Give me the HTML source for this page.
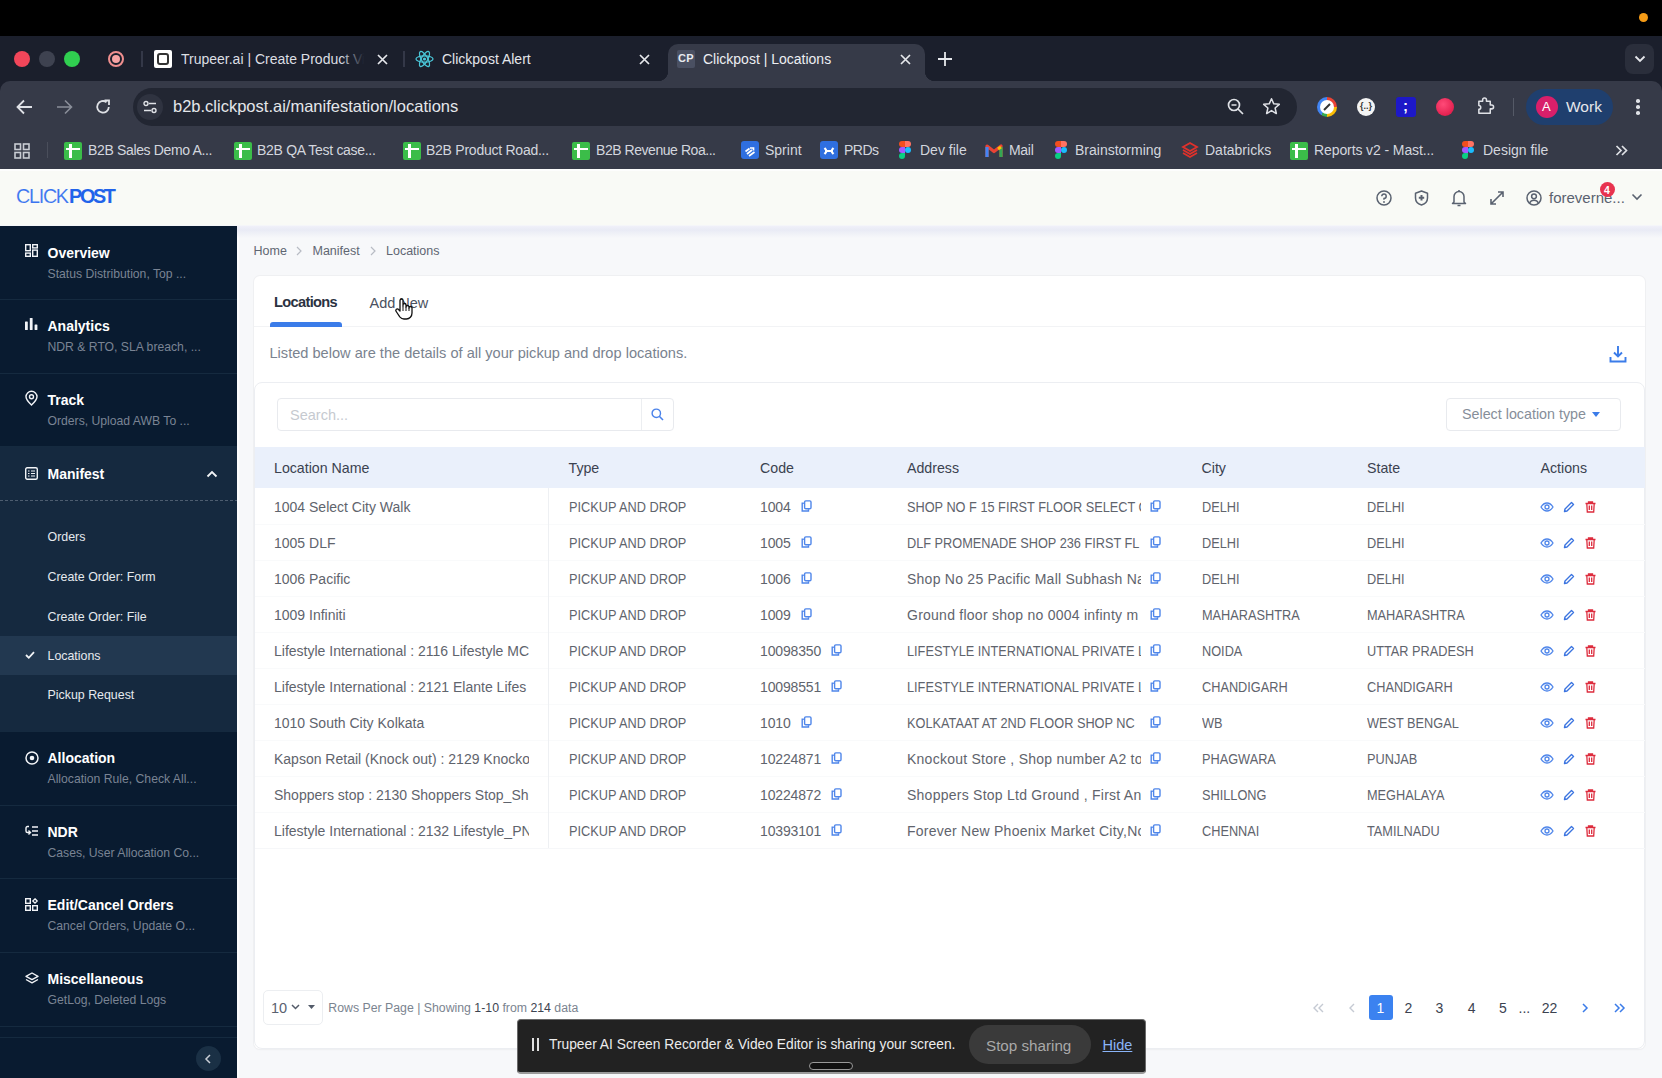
<!DOCTYPE html>
<html><head><meta charset="utf-8">
<style>
*{box-sizing:border-box;margin:0;padding:0}
html,body{width:1662px;height:1078px;overflow:hidden;background:#f5f6f9;font-family:"Liberation Sans",sans-serif}
.a{position:absolute}
.t{position:absolute;white-space:nowrap;line-height:1}
svg{position:absolute;overflow:visible}
/* chrome */
#topbar{left:0;top:0;width:1662px;height:36px;background:#000}
#tabstrip{left:0;top:36px;width:1662px;height:64px;background:#1b1f2c}
#toolbar{left:0;top:81px;width:1662px;height:89px;background:#363a48;border-radius:10px 10px 0 0}
#omni{left:133px;top:88px;width:1163px;height:38px;background:#222632;border-radius:19px}
.tabtxt{color:#e3e5ea;font-size:14px}
.bm{color:#d3d6de;font-size:14px}
/* app */
#apphdr{left:0;top:170px;width:1662px;height:56px;background:#f8f8f6;border-top:1px solid #d7d8dc}
#side{left:0;top:226px;width:237px;height:852px;background:#0b1a31}
#main{left:237px;top:226px;width:1425px;height:852px;background:#f7f8fa}
.st{color:#fff;font-weight:bold}
.ss{color:#7a8494}
.sep{position:absolute;left:0;width:237px;height:1px;background:#152a3f}
.sub{color:#e6e9ee}
/* table */
.th{color:#3a4150;font-size:14.5px}
.td{color:#50586a;font-size:14px}
</style></head><body>
<div class="a" id="topbar"></div>
<div class="a" style="left:1639px;top:13px;width:9px;height:9px;border-radius:50%;background:#f59b16"></div>
<div class="a" id="tabstrip"></div>
<div class="a" id="toolbar"></div>

<!-- CHROME -->
<div class="a" style="left:14px;top:51px;width:16px;height:16px;border-radius:50%;background:#f2465a"></div>
<div class="a" style="left:39px;top:51px;width:16px;height:16px;border-radius:50%;background:#3e4250"></div>
<div class="a" style="left:64px;top:51px;width:16px;height:16px;border-radius:50%;background:#30cf50"></div>
<div class="a" style="left:108px;top:51px;width:16px;height:16px;border-radius:50%;border:2px solid #f08f8f"></div>
<div class="a" style="left:112px;top:55px;width:8px;height:8px;border-radius:50%;background:#f7a3a3"></div>
<div class="a" style="left:141px;top:51px;width:2px;height:16px;background:#343848"></div>
<div class="a" style="left:154px;top:50px;width:18px;height:18px;background:#fff;border-radius:2px"></div>
<div class="a" style="left:157px;top:53px;width:12px;height:12px;border:2px solid #333;border-radius:3px"></div>
<div class="a" style="left:181px;top:48px;width:183px;height:22px;overflow:hidden"><div class="t tabtxt" style="left:0;top:4px;color:#dcdee3">Trupeer.ai | Create Product Vi</div><div class="a" style="left:160px;top:0;width:23px;height:22px;background:linear-gradient(90deg,rgba(27,31,44,0),#1b1f2c)"></div></div>
<svg style="left:377px;top:54px" width="11" height="11" viewBox="0 0 11 11"><path d="M1 1L10 10M10 1L1 10" stroke="#e6e8ec" stroke-width="1.7"/></svg>
<div class="a" style="left:403px;top:51px;width:2px;height:16px;background:#343848"></div>
<svg style="left:415px;top:50px" width="19" height="18" viewBox="-10 -9 20 18"><ellipse rx="9" ry="3.3" fill="none" stroke="#4ac6d8" stroke-width="1.3"/><ellipse rx="9" ry="3.3" transform="rotate(60)" fill="none" stroke="#4ac6d8" stroke-width="1.3"/><ellipse rx="9" ry="3.3" transform="rotate(-60)" fill="none" stroke="#4ac6d8" stroke-width="1.3"/><circle r="1.7" fill="#4ac6d8"/></svg>
<div class="t tabtxt" style="left:442px;top:52px">Clickpost Alert</div>
<svg style="left:639px;top:54px" width="11" height="11" viewBox="0 0 11 11"><path d="M1 1L10 10M10 1L1 10" stroke="#e6e8ec" stroke-width="1.7"/></svg>
<!-- active tab -->
<div class="a" style="left:668px;top:44px;width:257px;height:40px;background:#363a48;border-radius:10px 10px 0 0"></div>
<div class="a" style="left:658px;top:71px;width:10px;height:10px;background:radial-gradient(circle at 0 0,#1b1f2c 10px,#363a48 10.5px)"></div>
<div class="a" style="left:925px;top:71px;width:10px;height:10px;background:radial-gradient(circle at 100% 0,#1b1f2c 10px,#363a48 10.5px)"></div>
<div class="a" style="left:677px;top:50px;width:18px;height:18px;background:#4a5062;border-radius:2px"></div>
<div class="t" style="left:678px;top:53px;font-size:11px;font-weight:bold;color:#e8eaf0;letter-spacing:0.3px">CP</div>
<div class="t tabtxt" style="left:703px;top:52px;color:#eceef2">Clickpost | Locations</div>
<svg style="left:900px;top:54px" width="11" height="11" viewBox="0 0 11 11"><path d="M1 1L10 10M10 1L1 10" stroke="#e6e8ec" stroke-width="1.7"/></svg>
<svg style="left:938px;top:52px" width="14" height="14" viewBox="0 0 14 14"><path d="M7 0V14M0 7H14" stroke="#e6e8ec" stroke-width="1.8"/></svg>
<div class="a" style="left:1625px;top:44px;width:29px;height:30px;background:#2a2e3b;border-radius:8px"></div>
<svg style="left:1634px;top:55px" width="12" height="8" viewBox="0 0 12 8"><path d="M1.5 1.5L6 6L10.5 1.5" fill="none" stroke="#e6e8ec" stroke-width="1.8"/></svg>
<!-- toolbar -->
<svg style="left:16px;top:99px" width="17" height="16" viewBox="0 0 17 16"><path d="M16 8H2M8 1.5L1.5 8L8 14.5" fill="none" stroke="#dfe1e6" stroke-width="1.8"/></svg>
<svg style="left:56px;top:99px" width="17" height="16" viewBox="0 0 17 16"><path d="M1 8H15M9 1.5L15.5 8L9 14.5" fill="none" stroke="#8a8e99" stroke-width="1.6"/></svg>
<svg style="left:95px;top:99px" width="16" height="16" viewBox="0 0 16 16"><path d="M13.8 8A5.8 5.8 0 1 1 11.5 3.2" fill="none" stroke="#dfe1e6" stroke-width="1.8"/><path d="M9.5 1.5H14V6" fill="none" stroke="#dfe1e6" stroke-width="1.8"/></svg>
<div class="a" id="omni2" style="left:133px;top:88px;width:1164px;height:38px;background:#222632;border-radius:19px"></div>
<div class="a" style="left:137px;top:94px;width:26px;height:26px;background:#2f3340;border-radius:50%"></div>
<svg style="left:143px;top:100px" width="14" height="14" viewBox="0 0 14 14"><circle cx="3" cy="3.5" r="2" fill="none" stroke="#e0e2e7" stroke-width="1.4"/><path d="M6 3.5H13M1 10.5H8" stroke="#e0e2e7" stroke-width="1.6"/><circle cx="11" cy="10.5" r="2" fill="none" stroke="#e0e2e7" stroke-width="1.4"/></svg>
<div class="t" style="left:173px;top:98px;font-size:16.5px;color:#e4e6ea">b2b.clickpost.ai/manifestation/locations</div>
<svg style="left:1227px;top:98px" width="18" height="18" viewBox="0 0 18 18"><circle cx="7" cy="7" r="5.5" fill="none" stroke="#dfe1e6" stroke-width="1.7"/><path d="M4.5 7H9.5M11 11L16 16" stroke="#dfe1e6" stroke-width="1.7"/></svg>
<svg style="left:1262px;top:97px" width="19" height="19" viewBox="0 0 20 20"><path d="M10 1.8L12.4 7.2L18.2 7.7L13.8 11.6L15.1 17.4L10 14.3L4.9 17.4L6.2 11.6L1.8 7.7L7.6 7.2Z" fill="none" stroke="#dfe1e6" stroke-width="1.6" stroke-linejoin="round"/></svg>
<div class="a" style="left:1317px;top:97px;width:20px;height:20px;border-radius:50%;background:conic-gradient(#ea4335 0 25%,#fbbc05 0 50%,#34a853 0 60%,#4285f4 0)"></div>
<div class="a" style="left:1320px;top:100px;width:14px;height:14px;border-radius:50%;background:#fff"></div>
<svg style="left:1322px;top:102px" width="10" height="10" viewBox="0 0 10 10"><path d="M2 8L8 2" stroke="#333" stroke-width="2"/></svg>
<div class="a" style="left:1357px;top:98px;width:18px;height:18px;border-radius:50%;background:#f4f4f4"></div>
<div class="t" style="left:1360px;top:102px;font-size:9px;color:#333;font-weight:bold">{..}</div>
<div class="a" style="left:1396px;top:97px;width:20px;height:20px;border-radius:3px;background:#1d18c8"></div>
<div class="t" style="left:1403px;top:98px;font-size:15px;color:#fff;font-weight:bold">;</div>
<div class="a" style="left:1436px;top:98px;width:18px;height:18px;border-radius:50%;background:radial-gradient(circle at 40% 35%,#ff4a78,#d8103f)"></div>
<svg style="left:1476px;top:97px" width="19" height="19" viewBox="0 0 20 20"><path d="M3 4.5H7V3A2 2 0 0 1 11 3V4.5H15V8.5H16.5A2 2 0 0 1 16.5 12.5H15V17H3V13A2 2 0 0 0 3 9Z" fill="none" stroke="#dfe1e6" stroke-width="1.6" stroke-linejoin="round"/></svg>
<div class="a" style="left:1513px;top:98px;width:1px;height:18px;background:#555a67"></div>
<div class="a" style="left:1526px;top:89px;width:87px;height:36px;background:#1f3f6e;border-radius:18px"></div>
<div class="a" style="left:1536px;top:96px;width:22px;height:22px;border-radius:50%;background:#d81f6a"></div>
<div class="t" style="left:1542px;top:100px;font-size:13px;color:#fff">A</div>
<div class="t" style="left:1566px;top:99px;font-size:15.5px;color:#e6e8ec">Work</div>
<div class="a" style="left:1636px;top:99px;width:3.5px;height:3.5px;border-radius:50%;background:#dfe1e6"></div>
<div class="a" style="left:1636px;top:105px;width:3.5px;height:3.5px;border-radius:50%;background:#dfe1e6"></div>
<div class="a" style="left:1636px;top:111px;width:3.5px;height:3.5px;border-radius:50%;background:#dfe1e6"></div>
<!-- bookmarks -->
<svg style="left:14px;top:143px" width="16" height="16" viewBox="0 0 16 16"><rect x="1" y="1" width="5.5" height="5.5" fill="none" stroke="#c9ccd3" stroke-width="1.6"/><rect x="9.5" y="1" width="5.5" height="5.5" fill="none" stroke="#c9ccd3" stroke-width="1.6"/><rect x="1" y="9.5" width="5.5" height="5.5" fill="none" stroke="#c9ccd3" stroke-width="1.6"/><rect x="9.5" y="9.5" width="5.5" height="5.5" fill="none" stroke="#c9ccd3" stroke-width="1.6"/></svg>
<div class="a" style="left:47px;top:142px;width:1px;height:16px;background:#4a4e5b"></div>
<div class="a" style="left:64px;top:142px;width:18px;height:18px;background:#3bbd49;border-radius:2px"></div><div class="a" style="left:66px;top:148px;width:14px;height:2px;background:#fff"></div><div class="a" style="left:69px;top:144px;width:2.6px;height:13.5px;background:#fff"></div>
<div class="t bm" style="left:88px;top:143px;letter-spacing:-0.35px">B2B Sales Demo A...</div>
<div class="a" style="left:234px;top:142px;width:18px;height:18px;background:#3bbd49;border-radius:2px"></div><div class="a" style="left:236px;top:148px;width:14px;height:2px;background:#fff"></div><div class="a" style="left:239px;top:144px;width:2.6px;height:13.5px;background:#fff"></div>
<div class="t bm" style="left:257px;top:143px;letter-spacing:-0.3px">B2B QA Test case...</div>
<div class="a" style="left:403px;top:142px;width:18px;height:18px;background:#3bbd49;border-radius:2px"></div><div class="a" style="left:405px;top:148px;width:14px;height:2px;background:#fff"></div><div class="a" style="left:408px;top:144px;width:2.6px;height:13.5px;background:#fff"></div>
<div class="t bm" style="left:426px;top:143px;letter-spacing:-0.25px">B2B Product Road...</div>
<div class="a" style="left:572px;top:142px;width:18px;height:18px;background:#3bbd49;border-radius:2px"></div><div class="a" style="left:574px;top:148px;width:14px;height:2px;background:#fff"></div><div class="a" style="left:577px;top:144px;width:2.6px;height:13.5px;background:#fff"></div>
<div class="t bm" style="left:596px;top:143px;letter-spacing:-0.45px">B2B Revenue Roa...</div>
<div class="a" style="left:741px;top:141px;width:18px;height:18px;background:#2f6fe0;border-radius:3px"></div><svg style="left:744px;top:145px" width="12" height="12" viewBox="0 0 12 12"><path d="M1.5 6.5L5.5 3.5M3 9L8 5M5 11L10.5 7M6 3H9.5V5.5" fill="none" stroke="#fff" stroke-width="1.7"/></svg>
<div class="t bm" style="left:765px;top:143px;letter-spacing:0px">Sprint</div>
<div class="a" style="left:820px;top:141px;width:18px;height:18px;background:#2f6fe0;border-radius:3px"></div><svg style="left:823px;top:145px" width="12" height="12" viewBox="0 0 12 12"><path d="M1.5 3C4 5.5 4 6.5 1.5 9M10.5 3C8 5.5 8 6.5 10.5 9M2 6H10" fill="none" stroke="#fff" stroke-width="2.2"/></svg>
<div class="t bm" style="left:844px;top:143px;letter-spacing:-0.5px">PRDs</div>
<div class="a" style="left:899px;top:141px;width:6px;height:6px;background:#f24e1e;border-radius:3px 0 0 3px"></div><div class="a" style="left:905px;top:141px;width:6px;height:6px;background:#ff7262;border-radius:0 3px 3px 0"></div><div class="a" style="left:899px;top:147px;width:6px;height:6px;background:#a259ff;border-radius:3px 0 0 3px"></div><div class="a" style="left:905px;top:147px;width:6px;height:6px;background:#1abcfe;border-radius:50%"></div><div class="a" style="left:899px;top:153px;width:6px;height:6px;background:#0acf83;border-radius:3px 0 3px 3px"></div>
<div class="t bm" style="left:920px;top:143px;letter-spacing:0px">Dev file</div>
<svg style="left:985px;top:143px" width="18" height="15" viewBox="0 0 18 15"><path d="M2 14V3L9 8.5L16 3V14" fill="none" stroke="#ea4335" stroke-width="3.2" stroke-linejoin="round"/><path d="M2 14V4" stroke="#4285f4" stroke-width="3.2"/><path d="M16 14V4" stroke="#34a853" stroke-width="3.2"/><path d="M16 4L13 6" stroke="#fbbc05" stroke-width="3"/></svg>
<div class="t bm" style="left:1009px;top:143px;letter-spacing:-0.3px">Mail</div>
<div class="a" style="left:1055px;top:141px;width:6px;height:6px;background:#f24e1e;border-radius:3px 0 0 3px"></div><div class="a" style="left:1061px;top:141px;width:6px;height:6px;background:#ff7262;border-radius:0 3px 3px 0"></div><div class="a" style="left:1055px;top:147px;width:6px;height:6px;background:#a259ff;border-radius:3px 0 0 3px"></div><div class="a" style="left:1061px;top:147px;width:6px;height:6px;background:#1abcfe;border-radius:50%"></div><div class="a" style="left:1055px;top:153px;width:6px;height:6px;background:#0acf83;border-radius:3px 0 3px 3px"></div>
<div class="t bm" style="left:1075px;top:143px;letter-spacing:0px">Brainstorming</div>
<svg style="left:1181px;top:141px" width="18" height="18" viewBox="0 0 18 18"><path d="M9 2L16 6L9 10L2 6Z M2 9L9 13L16 9 M2 12L9 16L16 12" fill="none" stroke="#e0312b" stroke-width="1.8"/></svg>
<div class="t bm" style="left:1205px;top:143px;letter-spacing:0px">Databricks</div>
<div class="a" style="left:1290px;top:142px;width:18px;height:18px;background:#3bbd49;border-radius:2px"></div><div class="a" style="left:1292px;top:148px;width:14px;height:2px;background:#fff"></div><div class="a" style="left:1295px;top:144px;width:2.6px;height:13.5px;background:#fff"></div>
<div class="t bm" style="left:1314px;top:143px;letter-spacing:-0.1px">Reports v2 - Mast...</div>
<div class="a" style="left:1462px;top:141px;width:6px;height:6px;background:#f24e1e;border-radius:3px 0 0 3px"></div><div class="a" style="left:1468px;top:141px;width:6px;height:6px;background:#ff7262;border-radius:0 3px 3px 0"></div><div class="a" style="left:1462px;top:147px;width:6px;height:6px;background:#a259ff;border-radius:3px 0 0 3px"></div><div class="a" style="left:1468px;top:147px;width:6px;height:6px;background:#1abcfe;border-radius:50%"></div><div class="a" style="left:1462px;top:153px;width:6px;height:6px;background:#0acf83;border-radius:3px 0 3px 3px"></div>
<div class="t bm" style="left:1483px;top:143px;letter-spacing:0px">Design file</div>
<svg style="left:1615px;top:145px" width="13" height="11" viewBox="0 0 13 11"><path d="M1.5 1L6 5.5L1.5 10M7 1L11.5 5.5L7 10" fill="none" stroke="#dfe1e6" stroke-width="1.7"/></svg>
<div class="a" id="main"></div>
<div class="a" style="left:0;top:169px;width:1662px;height:56px;background:#f9faf6;border-top:2px solid #fdfdfd"></div>
<div class="t " style="left:16px;top:186.9px;font-size:19.8px;color:#3a74f0;letter-spacing:-1.3px;-webkit-text-stroke:0.1px #f8f8f7">CLICK</div>
<div class="t " style="left:69px;top:186.9px;font-size:19.8px;color:#2163ea;font-weight:bold;letter-spacing:-2.3px">POST</div>
<svg style="left:1376px;top:190px" width="16" height="16" viewBox="0 0 16 16"><circle cx="8" cy="8" r="7" fill="none" stroke="#5a6270" stroke-width="1.5"/><path d="M5.8 6.2A2.2 2.2 0 1 1 8 8.4V9.8" fill="none" stroke="#5a6270" stroke-width="1.5"/><circle cx="8" cy="12" r="0.9" fill="#5a6270"/></svg>
<svg style="left:1414px;top:190px" width="15" height="16" viewBox="0 0 15 16"><path d="M7.5 1L13.5 3.2V8C13.5 11.5 10.8 14 7.5 15C4.2 14 1.5 11.5 1.5 8V3.2Z" fill="none" stroke="#5a6270" stroke-width="1.5" stroke-linejoin="round"/><path d="M7.5 5V10.5M4.8 7.7H10.2" stroke="#5a6270" stroke-width="2"/></svg>
<svg style="left:1451px;top:189px" width="16" height="18" viewBox="0 0 16 18"><path d="M3 13V7.5A5 5 0 0 1 13 7.5V13L14.5 14.5H1.5Z" fill="none" stroke="#5a6270" stroke-width="1.5" stroke-linejoin="round"/><path d="M6.5 16.5H9.5" stroke="#5a6270" stroke-width="1.5"/><path d="M8 1V2.5" stroke="#5a6270" stroke-width="1.5"/></svg>
<svg style="left:1489px;top:190px" width="16" height="16" viewBox="0 0 16 16"><path d="M2 14L14 2M9 2H14V7M2 9V14H7" fill="none" stroke="#5a6270" stroke-width="1.6"/></svg>
<svg style="left:1526px;top:190px" width="16" height="16" viewBox="0 0 16 16"><circle cx="8" cy="8" r="7" fill="none" stroke="#5a6270" stroke-width="1.5"/><circle cx="8" cy="6.3" r="2.4" fill="none" stroke="#5a6270" stroke-width="1.5"/><path d="M3.6 13C4.6 11 6.2 10.3 8 10.3S11.4 11 12.4 13" fill="none" stroke="#5a6270" stroke-width="1.5"/></svg>
<div class="t " style="left:1549px;top:190.2px;font-size:15px;color:#5a6270;letter-spacing:0px">foreverne...</div>
<div class="a" style="left:1600px;top:182px;width:15px;height:15px;border-radius:50%;background:#e8334f"></div>
<div class="t " style="left:1604px;top:184.6px;font-size:10.5px;color:#fff;font-weight:bold">4</div>
<svg style="left:1631px;top:193px" width="12" height="8" viewBox="0 0 12 8"><path d="M1.5 1.5L6 6L10.5 1.5" fill="none" stroke="#5a6270" stroke-width="1.6"/></svg>
<div class="a" style="left:0;top:226px;width:237px;height:852px;background:#091b30"></div>
<div class="a" style="left:0;top:446px;width:237px;height:286px;background:#15293f"></div>
<div class="a" style="left:237px;top:226px;width:2px;height:852px;background:#fdfdfe"></div>
<div class="a" style="left:0;top:636px;width:237px;height:39px;background:#223850"></div>
<div class="sep" style="top:299px"></div>
<div class="sep" style="top:373px"></div>
<div class="sep" style="top:446px"></div>
<div class="sep" style="top:731px"></div>
<div class="sep" style="top:805px"></div>
<div class="sep" style="top:878px"></div>
<div class="sep" style="top:952px"></div>
<div class="sep" style="top:1026px"></div>
<div class="sep" style="top:1037px"></div>
<div class="a" style="left:0;top:500px;width:237px;height:1px;background:repeating-linear-gradient(90deg,#4d5d70 0 3px,transparent 3px 5px)"></div>
<div class="t st" style="left:47.5px;top:245.6px;font-size:14px;">Overview</div>
<div class="t ss" style="left:47.5px;top:268.1px;font-size:12.2px;">Status Distribution, Top ...</div>
<div class="t st" style="left:47.5px;top:318.6px;font-size:14px;">Analytics</div>
<div class="t ss" style="left:47.5px;top:341.1px;font-size:12.2px;">NDR &amp; RTO, SLA breach, ...</div>
<div class="t st" style="left:47.5px;top:392.6px;font-size:14px;">Track</div>
<div class="t ss" style="left:47.5px;top:415.1px;font-size:12.2px;">Orders, Upload AWB To ...</div>
<div class="t st" style="left:47.5px;top:750.6px;font-size:14px;">Allocation</div>
<div class="t ss" style="left:47.5px;top:773.1px;font-size:12.2px;">Allocation Rule, Check All...</div>
<div class="t st" style="left:47.5px;top:824.6px;font-size:14px;">NDR</div>
<div class="t ss" style="left:47.5px;top:847.1px;font-size:12.2px;">Cases, User Allocation Co...</div>
<div class="t st" style="left:47.5px;top:897.6px;font-size:14px;">Edit/Cancel Orders</div>
<div class="t ss" style="left:47.5px;top:920.1px;font-size:12.2px;">Cancel Orders, Update O...</div>
<div class="t st" style="left:47.5px;top:971.6px;font-size:14px;">Miscellaneous</div>
<div class="t ss" style="left:47.5px;top:994.1px;font-size:12.2px;">GetLog, Deleted Logs</div>
<div class="t st" style="left:47.5px;top:466.5px;font-size:14px;">Manifest</div>
<div class="t sub" style="left:47.5px;top:530.8px;font-size:12.4px;">Orders</div>
<div class="t sub" style="left:47.5px;top:571.0px;font-size:12.4px;">Create Order: Form</div>
<div class="t sub" style="left:47.5px;top:610.5px;font-size:12.4px;">Create Order: File</div>
<div class="t sub" style="left:47.5px;top:649.8px;font-size:12.4px;">Locations</div>
<div class="t sub" style="left:47.5px;top:689.2px;font-size:12.4px;">Pickup Request</div>
<svg style="left:25px;top:244px" width="13" height="13" viewBox="0 0 13 13"><rect x="0.7" y="0.7" width="4.6" height="6" fill="none" stroke="#f2f4f7" stroke-width="1.4"/><rect x="7.7" y="0.7" width="4.6" height="3.2" fill="none" stroke="#f2f4f7" stroke-width="1.4"/><rect x="0.7" y="9.1" width="4.6" height="3.2" fill="none" stroke="#f2f4f7" stroke-width="1.4"/><rect x="7.7" y="6.1" width="4.6" height="6.2" fill="none" stroke="#f2f4f7" stroke-width="1.4"/></svg>
<svg style="left:25px;top:318px" width="13" height="12" viewBox="0 0 13 12"><rect x="0" y="3.5" width="2.8" height="8.5" rx="0.6" fill="#f2f4f7"/><rect x="4.8" y="0" width="2.8" height="12" rx="0.6" fill="#f2f4f7"/><rect x="9.6" y="6.5" width="2.8" height="5.5" rx="0.6" fill="#f2f4f7"/></svg>
<svg style="left:25px;top:391px" width="13" height="15" viewBox="0 0 13 15"><path d="M6.5 14C6.5 14 1 9 1 5.8A5.5 5.5 0 0 1 12 5.8C12 9 6.5 14 6.5 14Z" fill="none" stroke="#f2f4f7" stroke-width="1.4"/><circle cx="6.5" cy="5.8" r="2" fill="none" stroke="#f2f4f7" stroke-width="1.4"/></svg>
<svg style="left:25px;top:467px" width="13" height="13" viewBox="0 0 13 13"><rect x="0.7" y="0.7" width="11.6" height="11.6" rx="1.5" fill="none" stroke="#f2f4f7" stroke-width="1.4"/><path d="M3 4H4.5M6 4H10M3 6.5H4.5M6 6.5H10M3 9H4.5M6 9H10" stroke="#f2f4f7" stroke-width="1.2"/></svg>
<svg style="left:206px;top:470px" width="12" height="8" viewBox="0 0 12 8"><path d="M1.5 6.5L6 2L10.5 6.5" fill="none" stroke="#f2f4f7" stroke-width="1.8"/></svg>
<svg style="left:25px;top:651px" width="10" height="8" viewBox="0 0 10 8"><path d="M1 4L3.8 6.8L9 1.2" fill="none" stroke="#f2f4f7" stroke-width="1.8"/></svg>
<svg style="left:25px;top:751px" width="14" height="14" viewBox="0 0 14 14"><circle cx="7" cy="7" r="6" fill="none" stroke="#f2f4f7" stroke-width="1.5"/><circle cx="7" cy="7" r="2.3" fill="#f2f4f7"/></svg>
<svg style="left:25px;top:825px" width="14" height="12" viewBox="0 0 14 12"><path d="M4 1.5H2.5A1.5 1.5 0 0 0 1 3V6A1.5 1.5 0 0 0 2.5 7.5H5M3.5 5.5L5.5 7.5L3.5 9.5" fill="none" stroke="#f2f4f7" stroke-width="1.4"/><path d="M7 2H13M7 6H13M7 10H13" stroke="#f2f4f7" stroke-width="1.5"/></svg>
<svg style="left:25px;top:898px" width="13" height="13" viewBox="0 0 13 13"><rect x="0.7" y="0.7" width="4.6" height="4.6" fill="none" stroke="#f2f4f7" stroke-width="1.4"/><rect x="0.7" y="7.7" width="4.6" height="4.6" fill="none" stroke="#f2f4f7" stroke-width="1.4"/><rect x="7.7" y="7.7" width="4.6" height="4.6" fill="none" stroke="#f2f4f7" stroke-width="1.4"/><path d="M10 0.8L12.2 3L10 5.2L7.8 3Z" fill="none" stroke="#f2f4f7" stroke-width="1.3"/></svg>
<svg style="left:25px;top:972px" width="14" height="14" viewBox="0 0 14 14"><path d="M7 1L13 4.3L7 7.6L1 4.3Z" fill="none" stroke="#f2f4f7" stroke-width="1.4" stroke-linejoin="round"/><path d="M1 7.5L7 10.8L13 7.5" fill="none" stroke="#f2f4f7" stroke-width="1.4" stroke-linejoin="round"/></svg>
<div class="a" style="left:196px;top:1046px;width:25px;height:25px;border-radius:50%;background:#1a3045"></div>
<svg style="left:204px;top:1054px" width="8" height="10" viewBox="0 0 8 10"><path d="M6 1L2 5L6 9" fill="none" stroke="#c9ced6" stroke-width="1.5"/></svg>
<div class="a" style="left:237px;top:226px;width:1425px;height:12px;background:linear-gradient(180deg,#f0f0f9 0,#e9ebf5 4px,rgba(247,248,250,0) 12px)"></div>
<div class="t " style="left:253.5px;top:245.0px;font-size:12.5px;color:#5f6672">Home</div>
<svg style="left:296px;top:246px" width="6" height="10" viewBox="0 0 6 10"><path d="M1 1L5 5L1 9" fill="none" stroke="#b8bcc4" stroke-width="1.2"/></svg>
<div class="t " style="left:312.5px;top:245.0px;font-size:12.5px;color:#5f6672">Manifest</div>
<svg style="left:370px;top:246px" width="6" height="10" viewBox="0 0 6 10"><path d="M1 1L5 5L1 9" fill="none" stroke="#b8bcc4" stroke-width="1.2"/></svg>
<div class="t " style="left:386px;top:245.0px;font-size:12.5px;color:#5f6672">Locations</div>
<div class="a" style="left:254px;top:276px;width:1391px;height:773px;background:#fff;border-radius:6px;box-shadow:0 0 0 1px #eff0f2,0 1px 2px rgba(0,0,0,0.03)"></div>
<div class="a" style="left:254px;top:326px;width:1391px;height:1px;background:#f2f3f5"></div>
<div class="t " style="left:274px;top:295.3px;font-size:14.6px;color:#2b3241;font-weight:bold;letter-spacing:-0.65px">Locations</div>
<div class="t " style="left:369.5px;top:295.6px;font-size:14.5px;color:#4a5160">Add New</div>
<div class="a" style="left:270px;top:322px;width:72px;height:5px;background:#3b7ce9;border-radius:3px 3px 0 0"></div>
<div class="t " style="left:269.5px;top:346.0px;font-size:14.6px;color:#7a838f">Listed below are the details of all your pickup and drop locations.</div>
<svg style="left:1609px;top:345px" width="18" height="18" viewBox="0 0 18 18"><path d="M9 1V11M5 7.5L9 11.5L13 7.5" fill="none" stroke="#3b7ce9" stroke-width="1.9"/><path d="M1.5 12V16.5H16.5V12" fill="none" stroke="#3b7ce9" stroke-width="1.9"/></svg>
<div class="a" style="left:254px;top:382px;width:1391px;height:667px;border:1px solid #eceef2;border-radius:8px"></div>
<div class="a" style="left:277px;top:398px;width:397px;height:33px;border:1px solid #e8eaee;border-radius:4px;background:#fff"></div>
<div class="a" style="left:641px;top:399px;width:1px;height:31px;background:#eceef1"></div>
<div class="t " style="left:290px;top:407.7px;font-size:14.5px;color:#c6cad0">Search...</div>
<svg style="left:651px;top:408px" width="13" height="13" viewBox="0 0 13 13"><circle cx="5.3" cy="5.3" r="4.2" fill="none" stroke="#4a82ea" stroke-width="1.4"/><path d="M8.3 8.3L12 12" stroke="#4a82ea" stroke-width="1.6"/></svg>
<div class="a" style="left:1446px;top:398px;width:175px;height:33px;border:1px solid #e8eaee;border-radius:4px;background:#fff"></div>
<div class="t " style="left:1462px;top:407.3px;font-size:14.3px;color:#868e99">Select location type</div>
<svg style="left:1592px;top:412px" width="8" height="5" viewBox="0 0 8 5"><path d="M0 0H8L4 5Z" fill="#3b7ce9"/></svg>
<div class="a" style="left:255px;top:447px;width:1390px;height:41px;background:#eaf0fb"></div>
<div class="t " style="left:274px;top:461.2px;font-size:14.2px;color:#3b4250">Location Name</div>
<div class="t " style="left:568.5px;top:461.2px;font-size:14.2px;color:#3b4250">Type</div>
<div class="t " style="left:760px;top:461.2px;font-size:14.2px;color:#3b4250">Code</div>
<div class="t " style="left:907px;top:461.2px;font-size:14.2px;color:#3b4250">Address</div>
<div class="t " style="left:1201.5px;top:461.2px;font-size:14.2px;color:#3b4250">City</div>
<div class="t " style="left:1367px;top:461.2px;font-size:14.2px;color:#3b4250">State</div>
<div class="t " style="left:1540.5px;top:461.2px;font-size:14.2px;color:#3b4250">Actions</div>
<div class="a" style="left:274px;top:492px;width:255px;height:28px;overflow:hidden"><div class="t " style="left:0px;top:7.7px;font-size:14px;color:#5f646d">1004 Select City Walk</div>
</div>
<div class="t " style="left:568.5px;top:499.7px;font-size:14px;color:#5f646d;transform:scaleX(0.91);transform-origin:0 0">PICKUP AND DROP</div>
<div class="t " style="left:760px;top:499.7px;font-size:14px;color:#5f646d;letter-spacing:-0.15px">1004</div>
<svg style="left:801px;top:500px" width="11" height="12" viewBox="0 0 11 12"><path d="M2.8 3.2H1.2V11H7.5V9.2" fill="none" stroke="#4f86ea" stroke-width="1.4"/><rect x="3.6" y="0.9" width="6.4" height="7.8" rx="1.2" fill="none" stroke="#4f86ea" stroke-width="1.4"/></svg>
<div class="a" style="left:907px;top:492px;width:234px;height:28px;overflow:hidden"><div class="t " style="left:0px;top:7.7px;font-size:14px;color:#5f646d;transform:scaleX(0.91);transform-origin:0 0">SHOP NO F 15 FIRST FLOOR SELECT C</div>
</div>
<svg style="left:1150px;top:500px" width="11" height="12" viewBox="0 0 11 12"><path d="M2.8 3.2H1.2V11H7.5V9.2" fill="none" stroke="#4f86ea" stroke-width="1.4"/><rect x="3.6" y="0.9" width="6.4" height="7.8" rx="1.2" fill="none" stroke="#4f86ea" stroke-width="1.4"/></svg>
<div class="t " style="left:1201.5px;top:499.7px;font-size:14px;color:#5f646d;transform:scaleX(0.91);transform-origin:0 0">DELHI</div>
<div class="t " style="left:1367px;top:499.7px;font-size:14px;color:#5f646d;transform:scaleX(0.91);transform-origin:0 0">DELHI</div>
<svg style="left:1540px;top:502px" width="14" height="10" viewBox="0 0 14 10"><path d="M1 5C3 1.8 5 1 7 1S11 1.8 13 5C11 8.2 9 9 7 9S3 8.2 1 5Z" fill="none" stroke="#4f86ea" stroke-width="1.3"/><circle cx="7" cy="5" r="2" fill="none" stroke="#4f86ea" stroke-width="1.3"/></svg>
<svg style="left:1563px;top:501px" width="12" height="12" viewBox="0 0 12 12"><path d="M1.5 10.5L2 8L8.5 1.5L10.5 3.5L4 10Z" fill="none" stroke="#3b74e0" stroke-width="1.4" stroke-linejoin="round"/></svg>
<svg style="left:1585px;top:501px" width="11" height="12" viewBox="0 0 11 12"><path d="M0.5 2.5H10.5M3.5 2.5V1H7.5V2.5M1.8 2.5L2.3 11H8.7L9.2 2.5M4.3 4.5V9M6.7 4.5V9" fill="none" stroke="#dd2b3c" stroke-width="1.3"/></svg>
<div class="a" style="left:255px;top:524px;width:1390px;height:1px;background:#f9fafb"></div>
<div class="a" style="left:274px;top:528px;width:255px;height:28px;overflow:hidden"><div class="t " style="left:0px;top:7.7px;font-size:14px;color:#5f646d">1005 DLF</div>
</div>
<div class="t " style="left:568.5px;top:535.7px;font-size:14px;color:#5f646d;transform:scaleX(0.91);transform-origin:0 0">PICKUP AND DROP</div>
<div class="t " style="left:760px;top:535.7px;font-size:14px;color:#5f646d;letter-spacing:-0.15px">1005</div>
<svg style="left:801px;top:536px" width="11" height="12" viewBox="0 0 11 12"><path d="M2.8 3.2H1.2V11H7.5V9.2" fill="none" stroke="#4f86ea" stroke-width="1.4"/><rect x="3.6" y="0.9" width="6.4" height="7.8" rx="1.2" fill="none" stroke="#4f86ea" stroke-width="1.4"/></svg>
<div class="a" style="left:907px;top:528px;width:234px;height:28px;overflow:hidden"><div class="t " style="left:0px;top:7.7px;font-size:14px;color:#5f646d;transform:scaleX(0.91);transform-origin:0 0">DLF PROMENADE SHOP 236 FIRST FL</div>
</div>
<svg style="left:1150px;top:536px" width="11" height="12" viewBox="0 0 11 12"><path d="M2.8 3.2H1.2V11H7.5V9.2" fill="none" stroke="#4f86ea" stroke-width="1.4"/><rect x="3.6" y="0.9" width="6.4" height="7.8" rx="1.2" fill="none" stroke="#4f86ea" stroke-width="1.4"/></svg>
<div class="t " style="left:1201.5px;top:535.7px;font-size:14px;color:#5f646d;transform:scaleX(0.91);transform-origin:0 0">DELHI</div>
<div class="t " style="left:1367px;top:535.7px;font-size:14px;color:#5f646d;transform:scaleX(0.91);transform-origin:0 0">DELHI</div>
<svg style="left:1540px;top:538px" width="14" height="10" viewBox="0 0 14 10"><path d="M1 5C3 1.8 5 1 7 1S11 1.8 13 5C11 8.2 9 9 7 9S3 8.2 1 5Z" fill="none" stroke="#4f86ea" stroke-width="1.3"/><circle cx="7" cy="5" r="2" fill="none" stroke="#4f86ea" stroke-width="1.3"/></svg>
<svg style="left:1563px;top:537px" width="12" height="12" viewBox="0 0 12 12"><path d="M1.5 10.5L2 8L8.5 1.5L10.5 3.5L4 10Z" fill="none" stroke="#3b74e0" stroke-width="1.4" stroke-linejoin="round"/></svg>
<svg style="left:1585px;top:537px" width="11" height="12" viewBox="0 0 11 12"><path d="M0.5 2.5H10.5M3.5 2.5V1H7.5V2.5M1.8 2.5L2.3 11H8.7L9.2 2.5M4.3 4.5V9M6.7 4.5V9" fill="none" stroke="#dd2b3c" stroke-width="1.3"/></svg>
<div class="a" style="left:255px;top:560px;width:1390px;height:1px;background:#f9fafb"></div>
<div class="a" style="left:274px;top:564px;width:255px;height:28px;overflow:hidden"><div class="t " style="left:0px;top:7.7px;font-size:14px;color:#5f646d">1006 Pacific</div>
</div>
<div class="t " style="left:568.5px;top:571.7px;font-size:14px;color:#5f646d;transform:scaleX(0.91);transform-origin:0 0">PICKUP AND DROP</div>
<div class="t " style="left:760px;top:571.7px;font-size:14px;color:#5f646d;letter-spacing:-0.15px">1006</div>
<svg style="left:801px;top:572px" width="11" height="12" viewBox="0 0 11 12"><path d="M2.8 3.2H1.2V11H7.5V9.2" fill="none" stroke="#4f86ea" stroke-width="1.4"/><rect x="3.6" y="0.9" width="6.4" height="7.8" rx="1.2" fill="none" stroke="#4f86ea" stroke-width="1.4"/></svg>
<div class="a" style="left:907px;top:564px;width:234px;height:28px;overflow:hidden"><div class="t " style="left:0px;top:7.7px;font-size:14px;color:#5f646d;letter-spacing:0.25px">Shop No 25 Pacific Mall Subhash Nag</div>
</div>
<svg style="left:1150px;top:572px" width="11" height="12" viewBox="0 0 11 12"><path d="M2.8 3.2H1.2V11H7.5V9.2" fill="none" stroke="#4f86ea" stroke-width="1.4"/><rect x="3.6" y="0.9" width="6.4" height="7.8" rx="1.2" fill="none" stroke="#4f86ea" stroke-width="1.4"/></svg>
<div class="t " style="left:1201.5px;top:571.7px;font-size:14px;color:#5f646d;transform:scaleX(0.91);transform-origin:0 0">DELHI</div>
<div class="t " style="left:1367px;top:571.7px;font-size:14px;color:#5f646d;transform:scaleX(0.91);transform-origin:0 0">DELHI</div>
<svg style="left:1540px;top:574px" width="14" height="10" viewBox="0 0 14 10"><path d="M1 5C3 1.8 5 1 7 1S11 1.8 13 5C11 8.2 9 9 7 9S3 8.2 1 5Z" fill="none" stroke="#4f86ea" stroke-width="1.3"/><circle cx="7" cy="5" r="2" fill="none" stroke="#4f86ea" stroke-width="1.3"/></svg>
<svg style="left:1563px;top:573px" width="12" height="12" viewBox="0 0 12 12"><path d="M1.5 10.5L2 8L8.5 1.5L10.5 3.5L4 10Z" fill="none" stroke="#3b74e0" stroke-width="1.4" stroke-linejoin="round"/></svg>
<svg style="left:1585px;top:573px" width="11" height="12" viewBox="0 0 11 12"><path d="M0.5 2.5H10.5M3.5 2.5V1H7.5V2.5M1.8 2.5L2.3 11H8.7L9.2 2.5M4.3 4.5V9M6.7 4.5V9" fill="none" stroke="#dd2b3c" stroke-width="1.3"/></svg>
<div class="a" style="left:255px;top:596px;width:1390px;height:1px;background:#f9fafb"></div>
<div class="a" style="left:274px;top:600px;width:255px;height:28px;overflow:hidden"><div class="t " style="left:0px;top:7.7px;font-size:14px;color:#5f646d">1009 Infiniti</div>
</div>
<div class="t " style="left:568.5px;top:607.7px;font-size:14px;color:#5f646d;transform:scaleX(0.91);transform-origin:0 0">PICKUP AND DROP</div>
<div class="t " style="left:760px;top:607.7px;font-size:14px;color:#5f646d;letter-spacing:-0.15px">1009</div>
<svg style="left:801px;top:608px" width="11" height="12" viewBox="0 0 11 12"><path d="M2.8 3.2H1.2V11H7.5V9.2" fill="none" stroke="#4f86ea" stroke-width="1.4"/><rect x="3.6" y="0.9" width="6.4" height="7.8" rx="1.2" fill="none" stroke="#4f86ea" stroke-width="1.4"/></svg>
<div class="a" style="left:907px;top:600px;width:234px;height:28px;overflow:hidden"><div class="t " style="left:0px;top:7.7px;font-size:14px;color:#5f646d;letter-spacing:0.25px">Ground floor shop no 0004 infinty m</div>
</div>
<svg style="left:1150px;top:608px" width="11" height="12" viewBox="0 0 11 12"><path d="M2.8 3.2H1.2V11H7.5V9.2" fill="none" stroke="#4f86ea" stroke-width="1.4"/><rect x="3.6" y="0.9" width="6.4" height="7.8" rx="1.2" fill="none" stroke="#4f86ea" stroke-width="1.4"/></svg>
<div class="t " style="left:1201.5px;top:607.7px;font-size:14px;color:#5f646d;transform:scaleX(0.91);transform-origin:0 0">MAHARASHTRA</div>
<div class="t " style="left:1367px;top:607.7px;font-size:14px;color:#5f646d;transform:scaleX(0.91);transform-origin:0 0">MAHARASHTRA</div>
<svg style="left:1540px;top:610px" width="14" height="10" viewBox="0 0 14 10"><path d="M1 5C3 1.8 5 1 7 1S11 1.8 13 5C11 8.2 9 9 7 9S3 8.2 1 5Z" fill="none" stroke="#4f86ea" stroke-width="1.3"/><circle cx="7" cy="5" r="2" fill="none" stroke="#4f86ea" stroke-width="1.3"/></svg>
<svg style="left:1563px;top:609px" width="12" height="12" viewBox="0 0 12 12"><path d="M1.5 10.5L2 8L8.5 1.5L10.5 3.5L4 10Z" fill="none" stroke="#3b74e0" stroke-width="1.4" stroke-linejoin="round"/></svg>
<svg style="left:1585px;top:609px" width="11" height="12" viewBox="0 0 11 12"><path d="M0.5 2.5H10.5M3.5 2.5V1H7.5V2.5M1.8 2.5L2.3 11H8.7L9.2 2.5M4.3 4.5V9M6.7 4.5V9" fill="none" stroke="#dd2b3c" stroke-width="1.3"/></svg>
<div class="a" style="left:255px;top:632px;width:1390px;height:1px;background:#f9fafb"></div>
<div class="a" style="left:274px;top:636px;width:255px;height:28px;overflow:hidden"><div class="t " style="left:0px;top:7.7px;font-size:14px;color:#5f646d">Lifestyle International : 2116 Lifestyle MC</div>
</div>
<div class="t " style="left:568.5px;top:643.7px;font-size:14px;color:#5f646d;transform:scaleX(0.91);transform-origin:0 0">PICKUP AND DROP</div>
<div class="t " style="left:760px;top:643.7px;font-size:14px;color:#5f646d;letter-spacing:-0.15px">10098350</div>
<svg style="left:831px;top:644px" width="11" height="12" viewBox="0 0 11 12"><path d="M2.8 3.2H1.2V11H7.5V9.2" fill="none" stroke="#4f86ea" stroke-width="1.4"/><rect x="3.6" y="0.9" width="6.4" height="7.8" rx="1.2" fill="none" stroke="#4f86ea" stroke-width="1.4"/></svg>
<div class="a" style="left:907px;top:636px;width:234px;height:28px;overflow:hidden"><div class="t " style="left:0px;top:7.7px;font-size:14px;color:#5f646d;transform:scaleX(0.91);transform-origin:0 0">LIFESTYLE INTERNATIONAL PRIVATE L</div>
</div>
<svg style="left:1150px;top:644px" width="11" height="12" viewBox="0 0 11 12"><path d="M2.8 3.2H1.2V11H7.5V9.2" fill="none" stroke="#4f86ea" stroke-width="1.4"/><rect x="3.6" y="0.9" width="6.4" height="7.8" rx="1.2" fill="none" stroke="#4f86ea" stroke-width="1.4"/></svg>
<div class="t " style="left:1201.5px;top:643.7px;font-size:14px;color:#5f646d;transform:scaleX(0.91);transform-origin:0 0">NOIDA</div>
<div class="t " style="left:1367px;top:643.7px;font-size:14px;color:#5f646d;transform:scaleX(0.91);transform-origin:0 0">UTTAR PRADESH</div>
<svg style="left:1540px;top:646px" width="14" height="10" viewBox="0 0 14 10"><path d="M1 5C3 1.8 5 1 7 1S11 1.8 13 5C11 8.2 9 9 7 9S3 8.2 1 5Z" fill="none" stroke="#4f86ea" stroke-width="1.3"/><circle cx="7" cy="5" r="2" fill="none" stroke="#4f86ea" stroke-width="1.3"/></svg>
<svg style="left:1563px;top:645px" width="12" height="12" viewBox="0 0 12 12"><path d="M1.5 10.5L2 8L8.5 1.5L10.5 3.5L4 10Z" fill="none" stroke="#3b74e0" stroke-width="1.4" stroke-linejoin="round"/></svg>
<svg style="left:1585px;top:645px" width="11" height="12" viewBox="0 0 11 12"><path d="M0.5 2.5H10.5M3.5 2.5V1H7.5V2.5M1.8 2.5L2.3 11H8.7L9.2 2.5M4.3 4.5V9M6.7 4.5V9" fill="none" stroke="#dd2b3c" stroke-width="1.3"/></svg>
<div class="a" style="left:255px;top:668px;width:1390px;height:1px;background:#f9fafb"></div>
<div class="a" style="left:274px;top:672px;width:255px;height:28px;overflow:hidden"><div class="t " style="left:0px;top:7.7px;font-size:14px;color:#5f646d">Lifestyle International : 2121 Elante Lifes</div>
</div>
<div class="t " style="left:568.5px;top:679.7px;font-size:14px;color:#5f646d;transform:scaleX(0.91);transform-origin:0 0">PICKUP AND DROP</div>
<div class="t " style="left:760px;top:679.7px;font-size:14px;color:#5f646d;letter-spacing:-0.15px">10098551</div>
<svg style="left:831px;top:680px" width="11" height="12" viewBox="0 0 11 12"><path d="M2.8 3.2H1.2V11H7.5V9.2" fill="none" stroke="#4f86ea" stroke-width="1.4"/><rect x="3.6" y="0.9" width="6.4" height="7.8" rx="1.2" fill="none" stroke="#4f86ea" stroke-width="1.4"/></svg>
<div class="a" style="left:907px;top:672px;width:234px;height:28px;overflow:hidden"><div class="t " style="left:0px;top:7.7px;font-size:14px;color:#5f646d;transform:scaleX(0.91);transform-origin:0 0">LIFESTYLE INTERNATIONAL PRIVATE L</div>
</div>
<svg style="left:1150px;top:680px" width="11" height="12" viewBox="0 0 11 12"><path d="M2.8 3.2H1.2V11H7.5V9.2" fill="none" stroke="#4f86ea" stroke-width="1.4"/><rect x="3.6" y="0.9" width="6.4" height="7.8" rx="1.2" fill="none" stroke="#4f86ea" stroke-width="1.4"/></svg>
<div class="t " style="left:1201.5px;top:679.7px;font-size:14px;color:#5f646d;transform:scaleX(0.91);transform-origin:0 0">CHANDIGARH</div>
<div class="t " style="left:1367px;top:679.7px;font-size:14px;color:#5f646d;transform:scaleX(0.91);transform-origin:0 0">CHANDIGARH</div>
<svg style="left:1540px;top:682px" width="14" height="10" viewBox="0 0 14 10"><path d="M1 5C3 1.8 5 1 7 1S11 1.8 13 5C11 8.2 9 9 7 9S3 8.2 1 5Z" fill="none" stroke="#4f86ea" stroke-width="1.3"/><circle cx="7" cy="5" r="2" fill="none" stroke="#4f86ea" stroke-width="1.3"/></svg>
<svg style="left:1563px;top:681px" width="12" height="12" viewBox="0 0 12 12"><path d="M1.5 10.5L2 8L8.5 1.5L10.5 3.5L4 10Z" fill="none" stroke="#3b74e0" stroke-width="1.4" stroke-linejoin="round"/></svg>
<svg style="left:1585px;top:681px" width="11" height="12" viewBox="0 0 11 12"><path d="M0.5 2.5H10.5M3.5 2.5V1H7.5V2.5M1.8 2.5L2.3 11H8.7L9.2 2.5M4.3 4.5V9M6.7 4.5V9" fill="none" stroke="#dd2b3c" stroke-width="1.3"/></svg>
<div class="a" style="left:255px;top:704px;width:1390px;height:1px;background:#f9fafb"></div>
<div class="a" style="left:274px;top:708px;width:255px;height:28px;overflow:hidden"><div class="t " style="left:0px;top:7.7px;font-size:14px;color:#5f646d">1010 South City Kolkata</div>
</div>
<div class="t " style="left:568.5px;top:715.7px;font-size:14px;color:#5f646d;transform:scaleX(0.91);transform-origin:0 0">PICKUP AND DROP</div>
<div class="t " style="left:760px;top:715.7px;font-size:14px;color:#5f646d;letter-spacing:-0.15px">1010</div>
<svg style="left:801px;top:716px" width="11" height="12" viewBox="0 0 11 12"><path d="M2.8 3.2H1.2V11H7.5V9.2" fill="none" stroke="#4f86ea" stroke-width="1.4"/><rect x="3.6" y="0.9" width="6.4" height="7.8" rx="1.2" fill="none" stroke="#4f86ea" stroke-width="1.4"/></svg>
<div class="a" style="left:907px;top:708px;width:234px;height:28px;overflow:hidden"><div class="t " style="left:0px;top:7.7px;font-size:14px;color:#5f646d;transform:scaleX(0.91);transform-origin:0 0">KOLKATAAT AT 2ND FLOOR SHOP NC</div>
</div>
<svg style="left:1150px;top:716px" width="11" height="12" viewBox="0 0 11 12"><path d="M2.8 3.2H1.2V11H7.5V9.2" fill="none" stroke="#4f86ea" stroke-width="1.4"/><rect x="3.6" y="0.9" width="6.4" height="7.8" rx="1.2" fill="none" stroke="#4f86ea" stroke-width="1.4"/></svg>
<div class="t " style="left:1201.5px;top:715.7px;font-size:14px;color:#5f646d;transform:scaleX(0.91);transform-origin:0 0">WB</div>
<div class="t " style="left:1367px;top:715.7px;font-size:14px;color:#5f646d;transform:scaleX(0.91);transform-origin:0 0">WEST BENGAL</div>
<svg style="left:1540px;top:718px" width="14" height="10" viewBox="0 0 14 10"><path d="M1 5C3 1.8 5 1 7 1S11 1.8 13 5C11 8.2 9 9 7 9S3 8.2 1 5Z" fill="none" stroke="#4f86ea" stroke-width="1.3"/><circle cx="7" cy="5" r="2" fill="none" stroke="#4f86ea" stroke-width="1.3"/></svg>
<svg style="left:1563px;top:717px" width="12" height="12" viewBox="0 0 12 12"><path d="M1.5 10.5L2 8L8.5 1.5L10.5 3.5L4 10Z" fill="none" stroke="#3b74e0" stroke-width="1.4" stroke-linejoin="round"/></svg>
<svg style="left:1585px;top:717px" width="11" height="12" viewBox="0 0 11 12"><path d="M0.5 2.5H10.5M3.5 2.5V1H7.5V2.5M1.8 2.5L2.3 11H8.7L9.2 2.5M4.3 4.5V9M6.7 4.5V9" fill="none" stroke="#dd2b3c" stroke-width="1.3"/></svg>
<div class="a" style="left:255px;top:740px;width:1390px;height:1px;background:#f9fafb"></div>
<div class="a" style="left:274px;top:744px;width:255px;height:28px;overflow:hidden"><div class="t " style="left:0px;top:7.7px;font-size:14px;color:#5f646d">Kapson Retail (Knock out) : 2129 Knocko</div>
</div>
<div class="t " style="left:568.5px;top:751.7px;font-size:14px;color:#5f646d;transform:scaleX(0.91);transform-origin:0 0">PICKUP AND DROP</div>
<div class="t " style="left:760px;top:751.7px;font-size:14px;color:#5f646d;letter-spacing:-0.15px">10224871</div>
<svg style="left:831px;top:752px" width="11" height="12" viewBox="0 0 11 12"><path d="M2.8 3.2H1.2V11H7.5V9.2" fill="none" stroke="#4f86ea" stroke-width="1.4"/><rect x="3.6" y="0.9" width="6.4" height="7.8" rx="1.2" fill="none" stroke="#4f86ea" stroke-width="1.4"/></svg>
<div class="a" style="left:907px;top:744px;width:234px;height:28px;overflow:hidden"><div class="t " style="left:0px;top:7.7px;font-size:14px;color:#5f646d;letter-spacing:0.25px">Knockout Store , Shop number A2 to</div>
</div>
<svg style="left:1150px;top:752px" width="11" height="12" viewBox="0 0 11 12"><path d="M2.8 3.2H1.2V11H7.5V9.2" fill="none" stroke="#4f86ea" stroke-width="1.4"/><rect x="3.6" y="0.9" width="6.4" height="7.8" rx="1.2" fill="none" stroke="#4f86ea" stroke-width="1.4"/></svg>
<div class="t " style="left:1201.5px;top:751.7px;font-size:14px;color:#5f646d;transform:scaleX(0.91);transform-origin:0 0">PHAGWARA</div>
<div class="t " style="left:1367px;top:751.7px;font-size:14px;color:#5f646d;transform:scaleX(0.91);transform-origin:0 0">PUNJAB</div>
<svg style="left:1540px;top:754px" width="14" height="10" viewBox="0 0 14 10"><path d="M1 5C3 1.8 5 1 7 1S11 1.8 13 5C11 8.2 9 9 7 9S3 8.2 1 5Z" fill="none" stroke="#4f86ea" stroke-width="1.3"/><circle cx="7" cy="5" r="2" fill="none" stroke="#4f86ea" stroke-width="1.3"/></svg>
<svg style="left:1563px;top:753px" width="12" height="12" viewBox="0 0 12 12"><path d="M1.5 10.5L2 8L8.5 1.5L10.5 3.5L4 10Z" fill="none" stroke="#3b74e0" stroke-width="1.4" stroke-linejoin="round"/></svg>
<svg style="left:1585px;top:753px" width="11" height="12" viewBox="0 0 11 12"><path d="M0.5 2.5H10.5M3.5 2.5V1H7.5V2.5M1.8 2.5L2.3 11H8.7L9.2 2.5M4.3 4.5V9M6.7 4.5V9" fill="none" stroke="#dd2b3c" stroke-width="1.3"/></svg>
<div class="a" style="left:255px;top:776px;width:1390px;height:1px;background:#f9fafb"></div>
<div class="a" style="left:274px;top:780px;width:255px;height:28px;overflow:hidden"><div class="t " style="left:0px;top:7.7px;font-size:14px;color:#5f646d">Shoppers stop : 2130 Shoppers Stop_Shi</div>
</div>
<div class="t " style="left:568.5px;top:787.7px;font-size:14px;color:#5f646d;transform:scaleX(0.91);transform-origin:0 0">PICKUP AND DROP</div>
<div class="t " style="left:760px;top:787.7px;font-size:14px;color:#5f646d;letter-spacing:-0.15px">10224872</div>
<svg style="left:831px;top:788px" width="11" height="12" viewBox="0 0 11 12"><path d="M2.8 3.2H1.2V11H7.5V9.2" fill="none" stroke="#4f86ea" stroke-width="1.4"/><rect x="3.6" y="0.9" width="6.4" height="7.8" rx="1.2" fill="none" stroke="#4f86ea" stroke-width="1.4"/></svg>
<div class="a" style="left:907px;top:780px;width:234px;height:28px;overflow:hidden"><div class="t " style="left:0px;top:7.7px;font-size:14px;color:#5f646d;letter-spacing:0.25px">Shoppers Stop Ltd Ground , First Anc</div>
</div>
<svg style="left:1150px;top:788px" width="11" height="12" viewBox="0 0 11 12"><path d="M2.8 3.2H1.2V11H7.5V9.2" fill="none" stroke="#4f86ea" stroke-width="1.4"/><rect x="3.6" y="0.9" width="6.4" height="7.8" rx="1.2" fill="none" stroke="#4f86ea" stroke-width="1.4"/></svg>
<div class="t " style="left:1201.5px;top:787.7px;font-size:14px;color:#5f646d;transform:scaleX(0.91);transform-origin:0 0">SHILLONG</div>
<div class="t " style="left:1367px;top:787.7px;font-size:14px;color:#5f646d;transform:scaleX(0.91);transform-origin:0 0">MEGHALAYA</div>
<svg style="left:1540px;top:790px" width="14" height="10" viewBox="0 0 14 10"><path d="M1 5C3 1.8 5 1 7 1S11 1.8 13 5C11 8.2 9 9 7 9S3 8.2 1 5Z" fill="none" stroke="#4f86ea" stroke-width="1.3"/><circle cx="7" cy="5" r="2" fill="none" stroke="#4f86ea" stroke-width="1.3"/></svg>
<svg style="left:1563px;top:789px" width="12" height="12" viewBox="0 0 12 12"><path d="M1.5 10.5L2 8L8.5 1.5L10.5 3.5L4 10Z" fill="none" stroke="#3b74e0" stroke-width="1.4" stroke-linejoin="round"/></svg>
<svg style="left:1585px;top:789px" width="11" height="12" viewBox="0 0 11 12"><path d="M0.5 2.5H10.5M3.5 2.5V1H7.5V2.5M1.8 2.5L2.3 11H8.7L9.2 2.5M4.3 4.5V9M6.7 4.5V9" fill="none" stroke="#dd2b3c" stroke-width="1.3"/></svg>
<div class="a" style="left:255px;top:812px;width:1390px;height:1px;background:#f9fafb"></div>
<div class="a" style="left:274px;top:816px;width:255px;height:28px;overflow:hidden"><div class="t " style="left:0px;top:7.7px;font-size:14px;color:#5f646d">Lifestyle International : 2132 Lifestyle_PN</div>
</div>
<div class="t " style="left:568.5px;top:823.7px;font-size:14px;color:#5f646d;transform:scaleX(0.91);transform-origin:0 0">PICKUP AND DROP</div>
<div class="t " style="left:760px;top:823.7px;font-size:14px;color:#5f646d;letter-spacing:-0.15px">10393101</div>
<svg style="left:831px;top:824px" width="11" height="12" viewBox="0 0 11 12"><path d="M2.8 3.2H1.2V11H7.5V9.2" fill="none" stroke="#4f86ea" stroke-width="1.4"/><rect x="3.6" y="0.9" width="6.4" height="7.8" rx="1.2" fill="none" stroke="#4f86ea" stroke-width="1.4"/></svg>
<div class="a" style="left:907px;top:816px;width:234px;height:28px;overflow:hidden"><div class="t " style="left:0px;top:7.7px;font-size:14px;color:#5f646d;letter-spacing:0.25px">Forever New Phoenix Market City,No</div>
</div>
<svg style="left:1150px;top:824px" width="11" height="12" viewBox="0 0 11 12"><path d="M2.8 3.2H1.2V11H7.5V9.2" fill="none" stroke="#4f86ea" stroke-width="1.4"/><rect x="3.6" y="0.9" width="6.4" height="7.8" rx="1.2" fill="none" stroke="#4f86ea" stroke-width="1.4"/></svg>
<div class="t " style="left:1201.5px;top:823.7px;font-size:14px;color:#5f646d;transform:scaleX(0.91);transform-origin:0 0">CHENNAI</div>
<div class="t " style="left:1367px;top:823.7px;font-size:14px;color:#5f646d;transform:scaleX(0.91);transform-origin:0 0">TAMILNADU</div>
<svg style="left:1540px;top:826px" width="14" height="10" viewBox="0 0 14 10"><path d="M1 5C3 1.8 5 1 7 1S11 1.8 13 5C11 8.2 9 9 7 9S3 8.2 1 5Z" fill="none" stroke="#4f86ea" stroke-width="1.3"/><circle cx="7" cy="5" r="2" fill="none" stroke="#4f86ea" stroke-width="1.3"/></svg>
<svg style="left:1563px;top:825px" width="12" height="12" viewBox="0 0 12 12"><path d="M1.5 10.5L2 8L8.5 1.5L10.5 3.5L4 10Z" fill="none" stroke="#3b74e0" stroke-width="1.4" stroke-linejoin="round"/></svg>
<svg style="left:1585px;top:825px" width="11" height="12" viewBox="0 0 11 12"><path d="M0.5 2.5H10.5M3.5 2.5V1H7.5V2.5M1.8 2.5L2.3 11H8.7L9.2 2.5M4.3 4.5V9M6.7 4.5V9" fill="none" stroke="#dd2b3c" stroke-width="1.3"/></svg>
<div class="a" style="left:548px;top:488px;width:1px;height:361px;background:#eef0f3"></div>
<div class="a" style="left:255px;top:848px;width:1390px;height:1px;background:#f6f7f9"></div>
<div class="a" style="left:263px;top:990px;width:60px;height:35px;border:1px solid #eceef1;border-radius:5px;background:#fff"></div>
<div class="t " style="left:271px;top:1000.7px;font-size:14.5px;color:#5a6170">10</div>
<svg style="left:291px;top:1004px" width="9" height="6" viewBox="0 0 9 6"><path d="M1 1L4.5 4.5L8 1" fill="none" stroke="#535b69" stroke-width="1.5"/></svg>
<svg style="left:308px;top:1005px" width="7" height="4" viewBox="0 0 7 4"><path d="M0 0H7L3.5 4Z" fill="#535b69"/></svg>
<div class="t " style="left:328.3px;top:1002.4px;font-size:12.3px;color:#7b8490">Rows Per Page | Showing <span style="color:#3d4451">1-10</span> from <span style="color:#3d4451">214</span> data</div>
<svg style="left:1312px;top:1003px" width="13" height="10" viewBox="0 0 13 10"><path d="M6 1L2 5L6 9M11 1L7 5L11 9" fill="none" stroke="#c5cad3" stroke-width="1.4"/></svg>
<svg style="left:1348px;top:1003px" width="7" height="10" viewBox="0 0 7 10"><path d="M6 1L2 5L6 9" fill="none" stroke="#c5cad3" stroke-width="1.4"/></svg>
<div class="a" style="left:1369px;top:995px;width:24px;height:25px;background:#3b82f0;border-radius:3px"></div>
<div class="t " style="left:1376.5px;top:1001.1px;font-size:14px;color:#fff">1</div>
<div class="t " style="left:1404.5px;top:1001.1px;font-size:14px;color:#3b4250">2</div>
<div class="t " style="left:1435.6px;top:1001.1px;font-size:14px;color:#3b4250">3</div>
<div class="t " style="left:1467.8px;top:1001.1px;font-size:14px;color:#3b4250">4</div>
<div class="t " style="left:1498.8999999999999px;top:1001.1px;font-size:14px;color:#3b4250">5</div>
<div class="t " style="left:1518.6px;top:1001.1px;font-size:14px;color:#3b4250">...</div>
<div class="t " style="left:1541.7px;top:1001.1px;font-size:14px;color:#3b4250">22</div>
<svg style="left:1582px;top:1003px" width="7" height="10" viewBox="0 0 7 10"><path d="M1 1L5 5L1 9" fill="none" stroke="#3b7ce9" stroke-width="1.5"/></svg>
<svg style="left:1613px;top:1003px" width="13" height="10" viewBox="0 0 13 10"><path d="M2 1L6 5L2 9M7 1L11 5L7 9" fill="none" stroke="#3b7ce9" stroke-width="1.5"/></svg>
<div class="a" style="left:517px;top:1019px;width:629px;height:55px;background:#222;border:1px solid #6a6a6a;border-bottom:2px solid #9a9a9a;border-radius:4px"></div>
<div class="a" style="left:532px;top:1038px;width:2px;height:13px;background:#e0e0e0"></div><div class="a" style="left:536.5px;top:1038px;width:2px;height:13px;background:#e0e0e0"></div>
<div class="t " style="left:549px;top:1038.3px;font-size:13.8px;color:#ececec">Trupeer AI Screen Recorder &amp; Video Editor is sharing your screen.</div>
<div class="a" style="left:969px;top:1025px;width:122px;height:39px;background:#3a3a3a;border-radius:20px"></div>
<div class="t " style="left:986px;top:1037.6px;font-size:15.2px;color:#a9a9a9">Stop sharing</div>
<div class="t " style="left:1102.5px;top:1037.7px;font-size:14.5px;color:#8ab4f8;text-decoration:underline">Hide</div>
<div class="a" style="left:809px;top:1062px;width:44px;height:8px;background:#111;border:1px solid #999;border-radius:5px"></div>
<svg style="left:395px;top:298px" width="18" height="22" viewBox="0 0 18 22"><path d="M5 9V2.5A1.5 1.5 0 0 1 8 2.5V8.5V7A1.5 1.5 0 0 1 11 7V9A1.5 1.5 0 0 1 14 9V10A1.5 1.5 0 0 1 17 10V15C17 18.5 14.5 21 11.5 21H9C7 21 5.8 20 4.8 18.8L1.2 13.5A1.5 1.5 0 0 1 3.5 11.5L5 13Z" fill="#fff" stroke="#111" stroke-width="1.3" stroke-linejoin="round"/><path d="M8 9V13M11 9V13M14 10V13" stroke="#111" stroke-width="1"/></svg>
</body></html>
